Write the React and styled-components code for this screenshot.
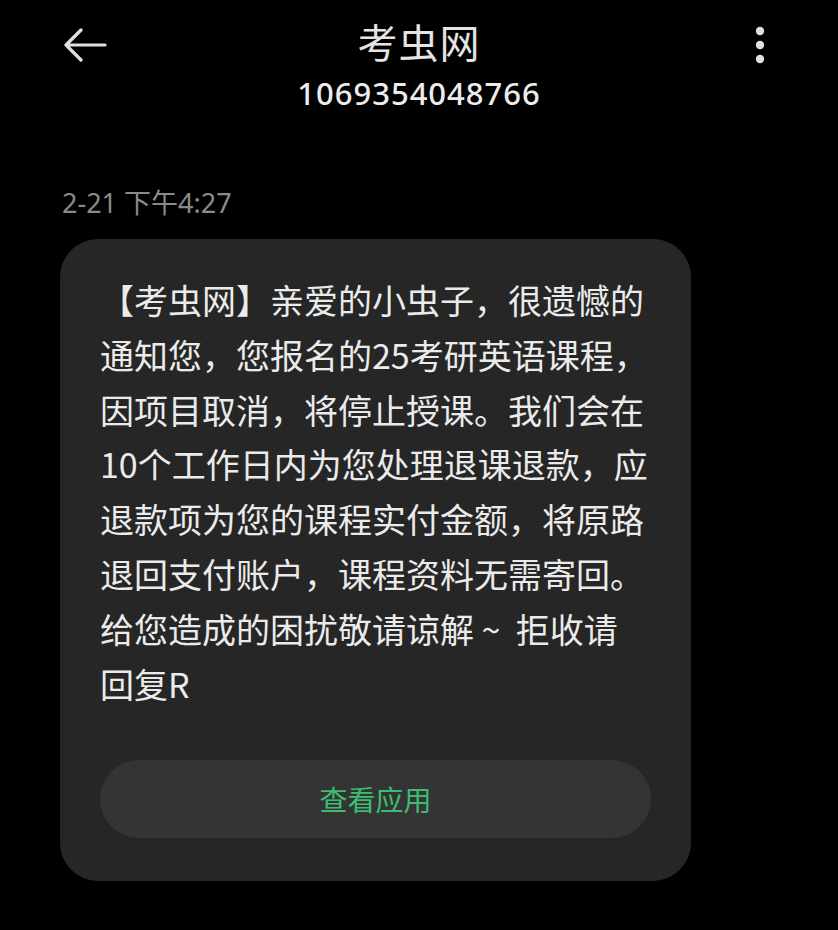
import React from "react";
import styled, { createGlobalStyle } from "styled-components";

const Global = createGlobalStyle`
  html, body { margin: 0; padding: 0; background: #000; }
  body { font-family: "Noto Sans", "Noto Sans CJK SC", sans-serif; }
`;

const Page = styled.div`
  width: 838px;
  height: 930px;
  background: #000;
  overflow: hidden;
  box-sizing: border-box;
`;

const Header = styled.header`
  display: grid;
  grid-template-columns: 120px 1fr 120px;
  align-items: start;
  padding-top: 13px;
`;

const IconBtn = styled.div`
  display: flex;
  align-items: center;
  justify-content: ${(p) => (p.$right ? "flex-end" : "flex-start")};
  height: 64px;
  padding: ${(p) => (p.$right ? "0 73px 0 0" : "0 0 0 63px")};
`;

const TitleBlock = styled.div`
  display: flex;
  flex-direction: column;
  align-items: center;
`;

const Title = styled.div`
  font-family: "Noto Sans CJK SC", sans-serif;
  font-size: 40px;
  font-weight: 400;
  color: #e4e4e4;
  line-height: 56px;
  letter-spacing: 1px;
`;

const Number = styled.div`
  font-family: "Noto Sans", sans-serif;
  font-size: 31px;
  font-weight: 500;
  color: #ececec;
  letter-spacing: 1px;
  line-height: 40px;
  margin-top: 4px;
`;

const Content = styled.main`
  padding: 72px 0 0 60px;
`;

const Stamp = styled.div`
  font-family: "Noto Sans", "Noto Sans CJK SC", sans-serif;
  font-size: 27px;
  color: #8a8a8a;
  line-height: 36px;
  padding-left: 2px;
`;

const Bubble = styled.div`
  margin-top: 18px;
  width: 631px;
  box-sizing: border-box;
  background: #262626;
  border-radius: 38px;
  padding: 34px 40px 43px 40px;
`;

const Body = styled.div`
  font-family: "Noto Sans CJK SC", sans-serif;
  font-size: 34px;
  color: #ebebeb;
  line-height: 54.8px;
`;

const Line = styled.div`
  white-space: pre;
`;

const Action = styled.div`
  margin-top: 49px;
  height: 78px;
  border-radius: 39px;
  background: #343434;
  display: flex;
  align-items: center;
  justify-content: center;
  font-family: "Noto Sans CJK SC", sans-serif;
  font-size: 28px;
  color: #3dbd70;
`;

const lines = [
  "【考虫网】亲爱的小虫子，很遗憾的",
  "通知您，您报名的25考研英语课程，",
  "因项目取消，将停止授课。我们会在",
  "10个工作日内为您处理退课退款，应",
  "退款项为您的课程实付金额，将原路",
  "退回支付账户，课程资料无需寄回。",
  "给您造成的困扰敬请谅解 ~  拒收请",
  "回复R",
];

export default function App() {
  return (
    <Page>
      <Global />
      <Header>
        <IconBtn>
          <svg width="44" height="34" viewBox="0 0 44 34">
            <path d="M42 17 H3 M18 2 L3 17 L18 32" fill="none" stroke="#e0e0e0" strokeWidth="3.2" strokeLinecap="round" strokeLinejoin="round" />
          </svg>
        </IconBtn>
        <TitleBlock>
          <Title>考虫网</Title>
          <Number>1069354048766</Number>
        </TitleBlock>
        <IconBtn $right>
          <svg width="10" height="38" viewBox="0 0 10 38">
            <circle cx="5" cy="5" r="4.2" fill="#e0e0e0" />
            <circle cx="5" cy="19" r="4.2" fill="#e0e0e0" />
            <circle cx="5" cy="33" r="4.2" fill="#e0e0e0" />
          </svg>
        </IconBtn>
      </Header>
      <Content>
        <Stamp>2-21 下午4:27</Stamp>
        <Bubble>
          <Body>
            {lines.map((l, i) => (
              <Line key={i}>{l}</Line>
            ))}
          </Body>
          <Action>查看应用</Action>
        </Bubble>
      </Content>
    </Page>
  );
}
